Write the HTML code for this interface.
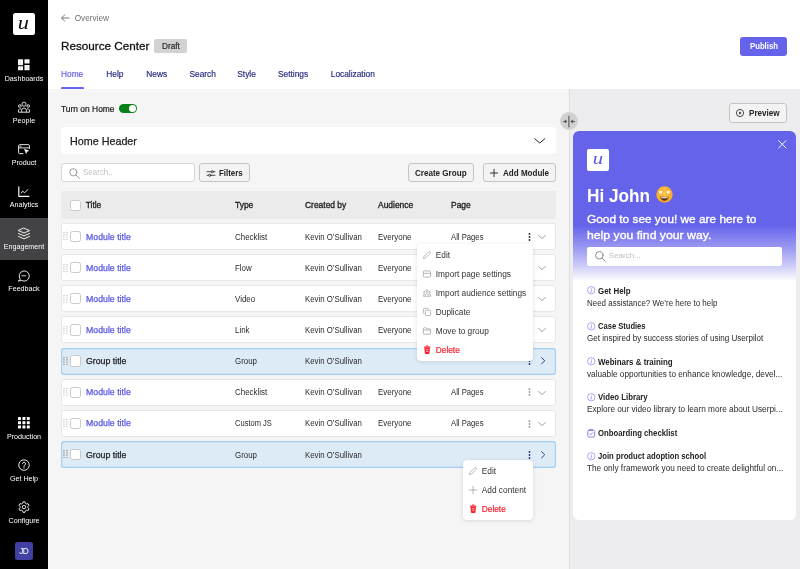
<!DOCTYPE html>
<html lang="en">
<head>
<meta charset="utf-8">
<title>Resource Center</title>
<style>
*{box-sizing:border-box;margin:0;padding:0}
html,body{width:800px;height:569px;overflow:hidden;background:#f5f5f5}
body{will-change:transform;font-family:"Liberation Sans",Arial,sans-serif;color:#222;position:relative;font-size:8.4px;-webkit-font-smoothing:antialiased}
.abs{position:absolute}
.t{position:absolute;white-space:nowrap;line-height:12px;height:12px}
svg{display:block;overflow:visible}

/* sidebar */
#side{position:absolute;left:0;top:0;width:48px;height:569px;background:#000}
.logo{position:absolute;left:13px;top:13px;width:22px;height:22px;background:#fff;border-radius:2.5px}
.nav{position:absolute;left:0;width:48px;height:42px;color:#fff}
.nav.on{background:#434345}
.nav svg{position:absolute;left:18px;top:8.600px;width:12px;height:12px}
.nav span{position:absolute;left:-10px;width:68px;text-align:center;top:22.800px;line-height:12px;font-size:7.300px;letter-spacing:0;transform:scaleX(.98)}
.avatar{position:absolute;left:15px;top:542px;width:18px;height:18px;border-radius:2.5px;background:#4340a3;color:#fff;font-size:8.300px;line-height:18.400px;text-align:center;letter-spacing:-.4px;text-indent:-.4px}

/* header */
#head{position:absolute;left:48px;top:0;width:752px;height:89px;background:#fff}
.tab{color:#2b2f80;font-size:8.350px;-webkit-text-stroke:.18px currentColor}
.tab.on{color:#6765ea}

/* buttons */
.btn{position:absolute;height:18.500px;border:1px solid #c4c4c4;border-radius:3px;background:#f3f3f3;color:#222;font-weight:700;font-size:8.1px}
.btn .t{top:2.900px;font-size:8.300px;transform-origin:0 50%}

/* table */
.th{position:absolute;left:61px;top:191px;width:494.5px;height:28px;background:#ebebeb;border-radius:2px}
.row{position:absolute;left:61px;width:494.500px;height:27px;background:#fff;border-radius:3px;box-shadow:inset 0 0 0 1px #e7e7eb}
.row.grp{background:#ddebf7;box-shadow:inset 0 0 0 1.150px #a5cef3}
.row .t{top:7.500px;font-size:8.300px;color:#2a2a2a;transform-origin:0 50%;transform:scaleX(.955)}
.row .c1{transform:scaleX(1.055);color:#1e1e1e;-webkit-text-stroke:.25px #1e1e1e}
.row .c1.lnk{color:#5b59e6;-webkit-text-stroke:.25px #5b59e6}
.row .c3{transform:scaleX(.941)}
.row .c5{transform:scaleX(.927)}
.th .t{top:8px;font-size:8.450px;font-weight:400;color:#222;-webkit-text-stroke:.32px #222}
.cb{position:absolute;left:9px;top:7.900px;width:11px;height:11.300px;border:1px solid #c9c9c9;border-radius:2.5px;background:#fff}
.th .cb{top:8.5px}
.lnk{color:#5b59e6}
.c1{left:24.7px}.c2{left:174px}.c3{left:244px}.c4{left:317px}.c5{left:390px}
.grip{position:absolute;left:2.200px;top:9.400px;width:4.800px;height:8.200px;stroke:#d6d6d6}
.grp .grip{stroke:#a9a9a9}
.dots{position:absolute;left:466.700px;top:9.700px;width:3px;height:8px}
.chev{position:absolute;left:476.800px;top:11.900px;width:8px;height:4px}
.chevr{position:absolute;left:479.500px;top:9.700px;width:4.200px;height:7.500px}

/* menus */
.menu{position:absolute;background:#fff;border-radius:4px;box-shadow:0 1px 5px rgba(0,0,0,.10),0 0 1px rgba(0,0,0,.08)}
.mi{position:absolute;left:0;height:19px;width:100%;color:#333;font-size:8.3px}
.mi svg{position:absolute;left:6.300px;top:5.500px;width:8px;height:8px}
.mi .t{left:19.300px;top:3.500px}
.mi.del{color:#f5222d;-webkit-text-stroke:.2px #f5222d}
.mi.del svg{left:7.400px;top:4.800px;width:6.400px;height:9.200px}

/* widget */
#wid{position:absolute;left:573px;top:130.500px;width:222.700px;height:389.500px;border-radius:6px;background:#fff;overflow:hidden}
#wid .hero{position:absolute;left:0;top:0;width:100%;height:150px;background:linear-gradient(180deg,#6563ea 0,#6563ea 94px,#9997f1 116px,#cdccf8 135px,#fff 150px)}
.wi{position:absolute;left:13.800px;width:200px}
.wi svg{position:absolute;left:0;top:1.7px;width:8.5px;height:8.5px}
.wi b{position:absolute;left:11.200px;top:0;white-space:nowrap;line-height:12px;font-size:8.300px;color:#222;transform-origin:0 50%;transform:scaleX(.955)}
.wi i{position:absolute;left:0;top:12.200px;white-space:nowrap;line-height:12px;font-style:normal;font-size:8.300px;color:#2a2a2a;transform-origin:0 50%;transform:scaleX(.968)}
</style>
</head>
<body>

<!-- ============ SIDEBAR ============ -->
<div id="side">
  <div class="logo"><svg viewBox="0 0 22 22" width="22" height="22"><text x="5.800" y="15.600" transform="translate(11 0) scale(1.180 1) translate(-11 0)" font-family="Liberation Serif,serif" font-style="italic" font-size="19" fill="#111">u</text></svg></div>
  <div class="nav" style="top:50px"><svg viewBox="0 0 12 12"><g fill="#fff"><rect x="0" y=".3" width="5.050" height="5.900" rx=".4"/><rect x="6.450" y=".3" width="5.100" height="4.100" rx=".4"/><rect x="0" y="7.300" width="5.050" height="4" rx=".4"/><rect x="6.450" y="5.900" width="5.100" height="5.400" rx=".4"/></g><g stroke="#000" stroke-width=".3" opacity=".35"><path d="M2.500.3v11M9 .3v11M0 4.900h5M6.450 9h5.100"/></g></svg><span>Dashboards</span></div>
  <div class="nav" style="top:92px"><svg viewBox="0 0 12 12" fill="none" stroke="#fff" stroke-width=".85"><circle cx="6" cy="3.200" r="2"/><path d="M3.600 11.200V9.400a2.400 2.400 0 0 1 4.800 0v1.800"/><circle cx="1.800" cy="5" r="1.300"/><circle cx="10.200" cy="5" r="1.300"/><path d="M.45 11.2V9.7A1.6 1.6 0 0 1 3.2 8.5M11.55 11.2V9.7A1.6 1.6 0 0 0 8.800 8.500M.45 11.2h11.1"/></svg><span>People</span></div>
  <div class="nav" style="top:134px"><svg viewBox="0 0 12 12" fill="none" stroke="#fff" stroke-width=".9"><path d="M5.400 10.650H1.600a1 1 0 0 1-1-1V2.650a1 1 0 0 1 1-1h8.800a1 1 0 0 1 1 1v3.200"/><path d="M.600 4.900h10.800M1.700 3.250h1.700"/><path d="M6.500 6.200l4.300 1.600-1.900.75-.75 1.950z" fill="#fff" stroke-width=".5"/></svg><span>Product</span></div>
  <div class="nav" style="top:176px"><svg viewBox="0 0 12 12" fill="none" stroke="#fff" stroke-width="1" stroke-linecap="round" stroke-linejoin="round"><path d="M.800 1.700V11.300h10.200" stroke-width="1.150"/><path d="M3.200 8l1.500-1.900 1.900 1.800 3.100-3.300" stroke-width=".85"/></svg><span>Analytics</span></div>
  <div class="nav on" style="top:218px"><svg viewBox="0 0 12 12" fill="none" stroke="#fff" stroke-width=".9" stroke-linejoin="round" stroke-linecap="round"><path d="M6 1.200l5.500 2.400L6 6 .500 3.600z"/><path d="M.500 6.500L6 8.900l5.500-2.400M.500 9.400L6 11.800l5.500-2.400"/></svg><span>Engagement</span></div>
  <div class="nav" style="top:260px"><svg viewBox="0 0 12 12" fill="none" stroke="#fff" stroke-width=".9" stroke-linecap="round" stroke-linejoin="round"><path d="M2.100 10.100A5.100 5.100 0 1 1 3.700 11.500L.600 12z"/><path d="M3.900 6.800h3.800" stroke-width=".8"/></svg><span>Feedback</span></div>
  <div class="nav" style="top:408px"><svg viewBox="0 0 12 12" fill="#fff"><rect x="0" y="0" width="3" height="3" rx=".4"/><rect x="4.400" y="0" width="3" height="3" rx=".4"/><rect x="8.800" y="0" width="3" height="3" rx=".4"/><rect x="0" y="4.200" width="3" height="3" rx=".4"/><rect x="4.400" y="4.200" width="3" height="3" rx=".4"/><rect x="8.800" y="4.200" width="3" height="3" rx=".4"/><rect x="0" y="8.400" width="3" height="3" rx=".4"/><rect x="4.400" y="8.400" width="3" height="3" rx=".4"/><rect x="8.800" y="8.400" width="3" height="3" rx=".4"/></svg><span>Production</span></div>
  <div class="nav" style="top:450px"><svg viewBox="0 0 12 12" fill="none" stroke="#fff" stroke-width=".9"><circle cx="6" cy="6.100" r="5.250"/><path d="M4.500 4.700a1.500 1.500 0 1 1 2.300 1.300c-.6.400-.8.700-.8 1.500" stroke-width="1" stroke-linecap="round"/><circle cx="6" cy="8.900" r=".55" fill="#fff" stroke="none"/></svg><span>Get Help</span></div>
  <div class="nav" style="top:492px"><svg viewBox="0 0 12 12" fill="none" stroke="#fff" stroke-width=".9" stroke-linejoin="round"><path d="M5.05 0.83L6.95 0.83L7.35 2.34L8.58 3.04L10.09 2.65L11.03 4.29L9.94 5.39L9.94 6.81L11.03 7.91L10.09 9.55L8.58 9.16L7.35 9.86L6.95 11.37L5.05 11.37L4.65 9.86L3.42 9.16L1.91 9.55L0.97 7.91L2.06 6.81L2.06 5.39L0.97 4.29L1.91 2.65L3.42 3.04L4.65 2.34z"/><circle cx="6" cy="6.100" r="1.700"/></svg><span>Configure</span></div>
  <div class="avatar">JD</div>
</div>

<!-- ============ HEADER ============ -->
<div id="head">
  <svg class="abs" style="left:13px;top:14px;width:8.500px;height:8px" viewBox="0 0 8.500 8" fill="none" stroke="#666" stroke-width=".9" stroke-linecap="round" stroke-linejoin="round"><path d="M8 4H.700M3.800.800L.600 4l3.200 3.200"/></svg>
  <div class="t" style="left:26.700px;top:12.800px;font-size:8.220px;color:#707070">Overview</div>
  <div class="t" style="left:13px;top:37px;height:18px;line-height:18px;font-size:11.700px;color:#111;-webkit-text-stroke:.3px #111">Resource Center</div>
  <div class="abs" style="left:106.400px;top:39px;width:33px;height:14px;background:#d2d2d2;-webkit-text-stroke:.2px #2a2a2a;border-radius:2px;text-align:center;font-size:8.200px;line-height:15.500px;color:#2a2a2a">Draft</div>
  <div class="abs" style="left:692px;top:37px;width:47px;height:18.500px;background:#6563ea;border-radius:3px;color:#fff;font-weight:700;font-size:8.300px;text-align:center;line-height:18.500px"><span style="display:inline-block;transform:scaleX(.934)">Publish</span></div>
  <div class="t tab on" style="left:13px;top:68px">Home</div>
  <div class="t tab" style="left:58.250px;top:68px">Help</div>
  <div class="t tab" style="left:98.250px;top:68px">News</div>
  <div class="t tab" style="left:141.500px;top:68px">Search</div>
  <div class="t tab" style="left:189.250px;top:68px">Style</div>
  <div class="t tab" style="left:230px;top:68px">Settings</div>
  <div class="t tab" style="left:282.750px;top:68px">Localization</div>
  <div class="abs" style="left:13px;top:86.500px;width:22.700px;height:2.500px;background:#6765ea;border-radius:1px 1px 0 0"></div>
</div>

<!-- ============ MAIN ============ -->
<div id="main">
  <div class="t" style="left:61px;top:102.600px;font-size:8.430px;color:#222;-webkit-text-stroke:.2px #222;transform:translateY(.01px)">Turn on Home</div>
  <div class="abs" style="left:119.200px;top:103.700px;width:18px;height:9.300px;border-radius:5px;background:#0a8018"><div class="abs" style="right:1px;top:1px;width:7.300px;height:7.300px;border-radius:4px;background:#fff"></div></div>

  <div class="abs" style="left:61px;top:126.500px;width:494.500px;height:27.500px;background:#fff;border-radius:3px">
    <div class="t" style="left:9px;top:7.500px;height:14px;line-height:14px;font-size:10.760px;color:#222;-webkit-text-stroke:.25px #222">Home Header</div>
    <svg class="abs" style="left:473px;top:11px;width:11.500px;height:6px" viewBox="0 0 11.500 6" fill="none" stroke="#222" stroke-width="1" stroke-linecap="round" stroke-linejoin="round"><path d="M.700.700l5.050 4.300L10.800.700"/></svg>
  </div>

  <div class="abs" style="left:61px;top:163px;width:133.500px;height:19px;background:#fff;border:1px solid #d6d6d6;border-radius:3px">
    <svg class="abs" style="left:7px;top:3.500px;width:11px;height:11px" viewBox="0 0 11 11" fill="none" stroke="#9c9c9c" stroke-width="1" stroke-linecap="round"><circle cx="4.300" cy="4.300" r="3.600"/><path d="M7 7l3.400 3.400"/></svg>
    <div class="t" style="left:21px;top:3.400px;font-size:8.200px;color:#c3c3c3;transform-origin:0 50%;transform:scaleX(.976)">Search..</div>
  </div>
  <div class="btn" style="left:199px;top:163px;height:19px;width:50.500px">
    <svg class="abs" style="left:6.500px;top:5.500px;width:8px;height:7px" viewBox="0 0 8 7" fill="none" stroke="#222" stroke-width=".8" stroke-linecap="round"><path d="M0 1.700h8M0 5.300h8"/><circle cx="5.300" cy="1.700" r="1.100" fill="#f4f4f4"/><circle cx="2.700" cy="5.300" r="1.100" fill="#f4f4f4"/></svg>
    <div class="t" style="left:19px;transform:scaleX(.952)">Filters</div>
  </div>
  <div class="btn" style="left:408px;top:163px;height:19px;width:65.500px"><div class="t" style="left:0;width:100%;text-align:center;transform-origin:50% 50%;transform:scaleX(.975)">Create Group</div></div>
  <div class="btn" style="left:482.500px;top:163px;height:19px;width:73px">
    <svg class="abs" style="left:6.800px;top:5px;width:8px;height:8px" viewBox="0 0 8 8" fill="none" stroke="#222" stroke-width=".9" stroke-linecap="round"><path d="M4 .300v7.400M.300 4h7.400"/></svg>
    <div class="t" style="left:19px;transform:scaleX(.971)">Add Module</div>
  </div>

  <div class="th"><span class="cb"></span><span class="t c1">Title</span><span class="t c2">Type</span><span class="t c3">Created by</span><span class="t c4">Audience</span><span class="t c5">Page</span></div>
  <div class="row" style="top:223.00px"><svg class="grip" viewBox="0 0 4.800 8.200"><path d="M0 .6h1.800M3 .6h1.800M0 2.900h1.800M3 2.900h1.800M0 5.200h1.800M3 5.200h1.800M0 7.500h1.800M3 7.500h1.800" stroke-width="1.200"/></svg><span class="cb"></span><span class="t c1 lnk">Module title</span><span class="t c2">Checklist</span><span class="t c3">Kevin O’Sullivan</span><span class="t c4">Everyone</span><span class="t c5">All Pages</span><svg class="dots" viewBox="0 0 3 8" fill="#222"><circle cx="1.500" cy="1" r=".9"/><circle cx="1.500" cy="4" r=".9"/><circle cx="1.500" cy="7" r=".9"/></svg><svg class="chev" viewBox="0 0 8 4" fill="none" stroke="#999" stroke-width=".9" stroke-linecap="round" stroke-linejoin="round"><path d="M.500.450L4 3.550 7.500.450"/></svg></div>
  <div class="row" style="top:254.15px"><svg class="grip" viewBox="0 0 4.800 8.200"><path d="M0 .6h1.800M3 .6h1.800M0 2.900h1.800M3 2.900h1.800M0 5.200h1.800M3 5.200h1.800M0 7.500h1.800M3 7.500h1.800" stroke-width="1.200"/></svg><span class="cb"></span><span class="t c1 lnk">Module title</span><span class="t c2">Flow</span><span class="t c3">Kevin O’Sullivan</span><span class="t c4">Everyone</span><span class="t c5">All Pages</span><svg class="dots" viewBox="0 0 3 8" fill="#9a9a9a"><circle cx="1.500" cy="1" r=".9"/><circle cx="1.500" cy="4" r=".9"/><circle cx="1.500" cy="7" r=".9"/></svg><svg class="chev" viewBox="0 0 8 4" fill="none" stroke="#999" stroke-width=".9" stroke-linecap="round" stroke-linejoin="round"><path d="M.500.450L4 3.550 7.500.450"/></svg></div>
  <div class="row" style="top:285.30px"><svg class="grip" viewBox="0 0 4.800 8.200"><path d="M0 .6h1.800M3 .6h1.800M0 2.900h1.800M3 2.900h1.800M0 5.200h1.800M3 5.200h1.800M0 7.500h1.800M3 7.500h1.800" stroke-width="1.200"/></svg><span class="cb"></span><span class="t c1 lnk">Module title</span><span class="t c2">Video</span><span class="t c3">Kevin O’Sullivan</span><span class="t c4">Everyone</span><span class="t c5">All Pages</span><svg class="dots" viewBox="0 0 3 8" fill="#9a9a9a"><circle cx="1.500" cy="1" r=".9"/><circle cx="1.500" cy="4" r=".9"/><circle cx="1.500" cy="7" r=".9"/></svg><svg class="chev" viewBox="0 0 8 4" fill="none" stroke="#999" stroke-width=".9" stroke-linecap="round" stroke-linejoin="round"><path d="M.500.450L4 3.550 7.500.450"/></svg></div>
  <div class="row" style="top:316.45px"><svg class="grip" viewBox="0 0 4.800 8.200"><path d="M0 .6h1.800M3 .6h1.800M0 2.900h1.800M3 2.900h1.800M0 5.200h1.800M3 5.200h1.800M0 7.500h1.800M3 7.500h1.800" stroke-width="1.200"/></svg><span class="cb"></span><span class="t c1 lnk">Module title</span><span class="t c2">Link</span><span class="t c3">Kevin O’Sullivan</span><span class="t c4">Everyone</span><span class="t c5">All Pages</span><svg class="dots" viewBox="0 0 3 8" fill="#9a9a9a"><circle cx="1.500" cy="1" r=".9"/><circle cx="1.500" cy="4" r=".9"/><circle cx="1.500" cy="7" r=".9"/></svg><svg class="chev" viewBox="0 0 8 4" fill="none" stroke="#999" stroke-width=".9" stroke-linecap="round" stroke-linejoin="round"><path d="M.500.450L4 3.550 7.500.450"/></svg></div>
  <div class="row grp" style="top:347.60px"><svg class="grip" viewBox="0 0 4.800 8.200"><path d="M0 .6h1.800M3 .6h1.800M0 2.900h1.800M3 2.900h1.800M0 5.200h1.800M3 5.200h1.800M0 7.500h1.800M3 7.500h1.800" stroke-width="1.200"/></svg><span class="cb"></span><span class="t c1">Group title</span><span class="t c2">Group</span><span class="t c3">Kevin O’Sullivan</span><svg class="dots" viewBox="0 0 3 8" fill="#2b2f80"><circle cx="1.500" cy="1" r=".9"/><circle cx="1.500" cy="4" r=".9"/><circle cx="1.500" cy="7" r=".9"/></svg><svg class="chevr" viewBox="0 0 4.500 8" fill="none" stroke="#2b2f80" stroke-width="1" stroke-linecap="round" stroke-linejoin="round"><path d="M.600.600L4 4 .600 7.400"/></svg></div>
  <div class="row" style="top:378.75px"><svg class="grip" viewBox="0 0 4.800 8.200"><path d="M0 .6h1.800M3 .6h1.800M0 2.900h1.800M3 2.900h1.800M0 5.200h1.800M3 5.200h1.800M0 7.500h1.800M3 7.500h1.800" stroke-width="1.200"/></svg><span class="cb"></span><span class="t c1 lnk">Module title</span><span class="t c2">Checklist</span><span class="t c3">Kevin O’Sullivan</span><span class="t c4">Everyone</span><span class="t c5">All Pages</span><svg class="dots" viewBox="0 0 3 8" fill="#9a9a9a"><circle cx="1.500" cy="1" r=".9"/><circle cx="1.500" cy="4" r=".9"/><circle cx="1.500" cy="7" r=".9"/></svg><svg class="chev" viewBox="0 0 8 4" fill="none" stroke="#999" stroke-width=".9" stroke-linecap="round" stroke-linejoin="round"><path d="M.500.450L4 3.550 7.500.450"/></svg></div>
  <div class="row" style="top:409.90px"><svg class="grip" viewBox="0 0 4.800 8.200"><path d="M0 .6h1.800M3 .6h1.800M0 2.900h1.800M3 2.900h1.800M0 5.200h1.800M3 5.200h1.800M0 7.500h1.800M3 7.500h1.800" stroke-width="1.200"/></svg><span class="cb"></span><span class="t c1 lnk">Module title</span><span class="t c2" style="transform:scaleX(.908)">Custom JS</span><span class="t c3">Kevin O’Sullivan</span><span class="t c4">Everyone</span><span class="t c5">All Pages</span><svg class="dots" viewBox="0 0 3 8" fill="#9a9a9a"><circle cx="1.500" cy="1" r=".9"/><circle cx="1.500" cy="4" r=".9"/><circle cx="1.500" cy="7" r=".9"/></svg><svg class="chev" viewBox="0 0 8 4" fill="none" stroke="#999" stroke-width=".9" stroke-linecap="round" stroke-linejoin="round"><path d="M.500.450L4 3.550 7.500.450"/></svg></div>
  <div class="row grp" style="top:441.05px"><svg class="grip" viewBox="0 0 4.800 8.200"><path d="M0 .6h1.800M3 .6h1.800M0 2.900h1.800M3 2.900h1.800M0 5.200h1.800M3 5.200h1.800M0 7.500h1.800M3 7.500h1.800" stroke-width="1.200"/></svg><span class="cb"></span><span class="t c1">Group title</span><span class="t c2">Group</span><span class="t c3">Kevin O’Sullivan</span><svg class="dots" viewBox="0 0 3 8" fill="#2b2f80"><circle cx="1.500" cy="1" r=".9"/><circle cx="1.500" cy="4" r=".9"/><circle cx="1.500" cy="7" r=".9"/></svg><svg class="chevr" viewBox="0 0 4.500 8" fill="none" stroke="#2b2f80" stroke-width="1" stroke-linecap="round" stroke-linejoin="round"><path d="M.600.600L4 4 .600 7.400"/></svg></div>

  <div class="abs" style="left:570px;top:89px;width:230px;height:480px;background:#ededef"></div>
  <div class="abs" style="left:569px;top:89px;width:1px;height:480px;background:#dedede"></div>
  <div class="abs" style="left:560px;top:112px;width:18px;height:18px;border-radius:9px;background:#d1d1d1">
    <svg class="abs" style="left:3px;top:3.500px;width:12px;height:11px" viewBox="0 0 12 11" fill="#333" stroke="#444" stroke-width=".7" stroke-linecap="round" stroke-linejoin="round"><path d="M5.900 0v11" stroke-width="1.100" stroke="#555"/><path d="M.300 5.500h2.200M8.800 5.500h2.900" /><path d="M2.300 4.100L4 5.500 2.300 6.900zM9.500 4.100L7.800 5.500l1.700 1.400z" stroke-width=".4"/></svg>
  </div>

  <div class="btn" style="left:729px;top:103px;width:58px;height:19.500px">
    <svg class="abs" style="left:6px;top:4.800px;width:8px;height:8px" viewBox="0 0 8 8" fill="none" stroke="#222" stroke-width=".8"><circle cx="4" cy="4" r="3.600"/><path d="M3.200 2.500L5.600 4 3.200 5.500z" fill="#222" stroke="none"/></svg>
    <div class="t" style="left:19px;top:3.100px;transform:scaleX(.978)">Preview</div>
  </div>

  <div class="menu" style="left:416.500px;top:243.500px;width:116.500px;height:117px">
    <div class="mi" style="top:2px"><svg viewBox="0 0 8 8" fill="none" stroke="#9a9a9a" stroke-width=".7" stroke-linejoin="round"><path d="M.500 7.500l.5-2L5.800.700a.8.800 0 0 1 1.100 0l.4.400a.8.800 0 0 1 0 1.100L2.500 7z"/></svg><div class="t">Edit</div></div>
    <div class="mi" style="top:21px"><svg viewBox="0 0 8 8" fill="none" stroke="#9a9a9a" stroke-width=".7"><rect x=".400" y=".900" width="7.200" height="6.200" rx=".9"/><path d="M.400 3.300h7.200"/></svg><div class="t">Import page settings</div></div>
    <div class="mi" style="top:40px"><svg viewBox="0 0 8 8" fill="none" stroke="#9a9a9a" stroke-width=".65"><circle cx="4" cy="2" r="1.200"/><path d="M2.400 7.300V6.200a1.600 1.600 0 0 1 3.200 0v1.100"/><circle cx="1.300" cy="3.300" r=".85"/><circle cx="6.700" cy="3.300" r=".85"/><path d="M.300 7.300V6.400a1 1 0 0 1 1.800-.7M7.700 7.300V6.400a1 1 0 0 0-1.800-.7M.300 7.300h7.400"/></svg><div class="t">Import audience settings</div></div>
    <div class="mi" style="top:58.800px"><svg viewBox="0 0 8 8" fill="none" stroke="#9a9a9a" stroke-width=".7"><rect x="2.300" y="2.300" width="5.300" height="5.300" rx="1"/><path d="M1.400 5.700a1 1 0 0 1-1-1V1.400a1 1 0 0 1 1-1h3.300a1 1 0 0 1 1 1"/></svg><div class="t">Duplicate</div></div>
    <div class="mi" style="top:77.800px"><svg viewBox="0 0 8 8" fill="none" stroke="#9a9a9a" stroke-width=".7" stroke-linejoin="round"><path d="M.400 6.500V1.500a.7.700 0 0 1 .7-.7h1.800l.9 1h3.100a.7.700 0 0 1 .7.700v4a.7.700 0 0 1-.7.700H1.100a.7.700 0 0 1-.7-.7zM.400 3h7.200"/></svg><div class="t">Move to group</div></div>
    <div class="mi del" style="top:96.500px"><svg viewBox="0 0 6.400 9.200" fill="#f5222d"><path d="M2.150 1.700a1.050 1.050 0 0 1 2.100 0" fill="none" stroke="#f5222d" stroke-width=".85"/><rect x="0" y="1.500" width="6.400" height="1.200" rx=".5"/><path d="M.450 3.100h5.500l-.45 5.250a.85.850 0 0 1-.85.750H1.750a.85.850 0 0 1-.85-.75z"/><path d="M1.800 4.600h2.800M1.900 6.300h2.600" stroke="#fff" stroke-width=".7" fill="none" opacity=".85"/></svg><div class="t">Delete</div></div>
  </div>

  <div class="menu" style="left:462.500px;top:460.200px;width:70.300px;height:60px">
    <div class="mi" style="top:1.700px"><svg viewBox="0 0 8 8" fill="none" stroke="#9a9a9a" stroke-width=".7" stroke-linejoin="round"><path d="M.500 7.500l.5-2L5.800.700a.8.800 0 0 1 1.100 0l.4.400a.8.800 0 0 1 0 1.100L2.500 7z"/></svg><div class="t">Edit</div></div>
    <div class="mi" style="top:20.500px"><svg viewBox="0 0 8 8" fill="none" stroke="#9a9a9a" stroke-width=".7" stroke-linecap="round"><path d="M4 .200v7.600M.200 4h7.600"/></svg><div class="t">Add content</div></div>
    <div class="mi del" style="top:39.400px"><svg viewBox="0 0 6.400 9.200" fill="#f5222d"><path d="M2.150 1.700a1.050 1.050 0 0 1 2.100 0" fill="none" stroke="#f5222d" stroke-width=".85"/><rect x="0" y="1.500" width="6.400" height="1.200" rx=".5"/><path d="M.450 3.100h5.500l-.45 5.250a.85.850 0 0 1-.85.750H1.750a.85.850 0 0 1-.85-.75z"/><path d="M1.800 4.600h2.800M1.900 6.300h2.600" stroke="#fff" stroke-width=".7" fill="none" opacity=".85"/></svg><div class="t">Delete</div></div>
  </div>
</div>

<!-- ============ PREVIEW ============ -->
<div id="wid"><div class="hero"></div>
  <svg class="abs" style="left:205px;top:9.700px;width:8.600px;height:8.600px" viewBox="0 0 9 9" fill="none" stroke="#fff" stroke-width="1" stroke-linecap="round"><path d="M.600.600l7.800 7.800M8.400.600L.600 8.400"/></svg>
  <div class="abs" style="left:13.800px;top:18.500px;width:22.300px;height:22.300px;background:#fff;border-radius:2px"><svg viewBox="0 0 22 22" width="22" height="22"><text x="6.600" y="14.900" transform="translate(11 0) scale(1.180 1) translate(-11 0)" font-family="Liberation Serif,serif" font-style="italic" font-size="17.500" fill="#5a58d8">u</text></svg></div>
  <div class="t" style="left:13.800px;top:52px;height:26px;line-height:26px;font-size:17.700px;font-weight:700;color:#fff;transform-origin:0 50%;transform:scaleX(.972)">Hi John</div>
  <svg class="abs" role="img" aria-label="🤩" style="left:82.600px;top:55.500px;width:17px;height:17px" viewBox="0 0 17 17"><title>🤩</title><defs><radialGradient id="fg" cx=".5" cy=".4" r=".6"><stop offset="0" stop-color="#ffd54a"/><stop offset="1" stop-color="#f7a325"/></radialGradient></defs><circle cx="8.500" cy="8.500" r="8.200" fill="url(#fg)"/><path d="M4.800 2.800l1 2.100 2.300.3-1.700 1.600.4 2.300-2-1.100-2 1.100.4-2.300L1.500 5.200l2.300-.3z" fill="#fff3c4" stroke="#e67f1a" stroke-width=".5"/><path d="M12.200 2.800l1 2.100 2.300.3-1.700 1.600.4 2.300-2-1.100-2 1.100.4-2.300-1.700-1.600 2.300-.3z" fill="#fff3c4" stroke="#e67f1a" stroke-width=".5"/><path d="M4.200 10.600c1.200.5 7.400.5 8.600 0-.3 2.600-2 4.200-4.300 4.200s-4-1.600-4.300-4.200z" fill="#5b3514"/><path d="M4.900 11c1.600.4 5.600.4 7.200 0l-.3 1c-1.600.4-5 .4-6.600 0z" fill="#fff"/></svg>
  <div class="t" style="left:13.800px;top:80.500px;height:16px;line-height:16px;font-size:11.700px;color:#fff;font-weight:400;-webkit-text-stroke:.36px #fff;transform-origin:0 50%;transform:scaleX(1.014)">Good to see you! we are here to</div>
  <div class="t" style="left:13.800px;top:96.500px;height:16px;line-height:16px;font-size:11.700px;color:#fff;font-weight:400;-webkit-text-stroke:.36px #fff;transform-origin:0 50%;transform:scaleX(1.048)">help you find your way.</div>
  <div class="abs" style="left:13.800px;top:116px;width:195.500px;height:19px;background:#fff;border-radius:2px">
    <svg class="abs" style="left:8px;top:4px;width:10.500px;height:10.500px" viewBox="0 0 10.500 10.500" fill="none" stroke="#8a8a8a" stroke-width="1" stroke-linecap="round"><circle cx="4.300" cy="4.300" r="3.700"/><path d="M7 7l3.200 3.200"/></svg>
    <div class="t" style="left:22px;top:3.500px;font-size:8px;color:#bdbdbd">Search...</div>
  </div>
  <div class="wi" style="top:154.1px"><svg viewBox="0 0 8.500 8.500" fill="none" stroke="#8e8cf3" stroke-width=".75"><circle cx="4.250" cy="4.250" r="3.700"/><path d="M4.450 3.700L4 6.300" stroke-linecap="round" stroke-width=".8"/><circle cx="4.600" cy="2.500" r=".45" fill="#8e8cf3" stroke="none"/></svg><b>Get Help</b><i style="transform:scaleX(0.959)">Need assistance? We’re here to help</i></div>
  <div class="wi" style="top:189.7px"><svg viewBox="0 0 8.500 8.500" fill="none" stroke="#8e8cf3" stroke-width=".75"><circle cx="4.250" cy="4.250" r="3.700"/><path d="M4.450 3.700L4 6.300" stroke-linecap="round" stroke-width=".8"/><circle cx="4.600" cy="2.500" r=".45" fill="#8e8cf3" stroke="none"/></svg><b style="transform:scaleX(0.912)">Case Studies</b><i style="transform:scaleX(0.973)">Get inspired by success stories of using Userpilot</i></div>
  <div class="wi" style="top:225.0px"><svg viewBox="0 0 8.500 8.500" fill="none" stroke="#8e8cf3" stroke-width=".75"><circle cx="4.250" cy="4.250" r="3.700"/><path d="M4.450 3.700L4 6.300" stroke-linecap="round" stroke-width=".8"/><circle cx="4.600" cy="2.500" r=".45" fill="#8e8cf3" stroke="none"/></svg><b>Webinars &amp; training</b><i style="transform:scaleX(0.989)">valuable opportunities to enhance knowledge, devel...</i></div>
  <div class="wi" style="top:260.8px"><svg viewBox="0 0 8.500 8.500" fill="none" stroke="#8e8cf3" stroke-width=".75"><circle cx="4.250" cy="4.250" r="3.700"/><path d="M4.450 3.700L4 6.300" stroke-linecap="round" stroke-width=".8"/><circle cx="4.600" cy="2.500" r=".45" fill="#8e8cf3" stroke="none"/></svg><b style="transform:scaleX(0.938)">Video Library</b><i style="transform:scaleX(0.994)">Explore our video library to learn more about Userpi...</i></div>
  <div class="wi" style="top:296.4px"><svg viewBox="0 0 8.500 8.500" fill="none" stroke="#6f6df0" stroke-width=".85" stroke-linejoin="round" stroke-linecap="round"><rect x=".800" y="1.300" width="6.900" height="6.700" rx="1.300"/><path d="M2.800 1.300V.600h2.900v.7" stroke-width=".8"/><path d="M2.900 4.700l1 1 1.800-2"/></svg><b style="transform:scaleX(0.934)">Onboarding checklist</b></div>
  <div class="wi" style="top:319.7px"><svg viewBox="0 0 8.500 8.500" fill="none" stroke="#8e8cf3" stroke-width=".75"><circle cx="4.250" cy="4.250" r="3.700"/><path d="M4.450 3.700L4 6.300" stroke-linecap="round" stroke-width=".8"/><circle cx="4.600" cy="2.500" r=".45" fill="#8e8cf3" stroke="none"/></svg><b style="transform:scaleX(0.927)">Join product adoption school</b><i style="transform:scaleX(0.992)">The only framework you need to create delightful on...</i></div>
</div>

</body>
</html>
